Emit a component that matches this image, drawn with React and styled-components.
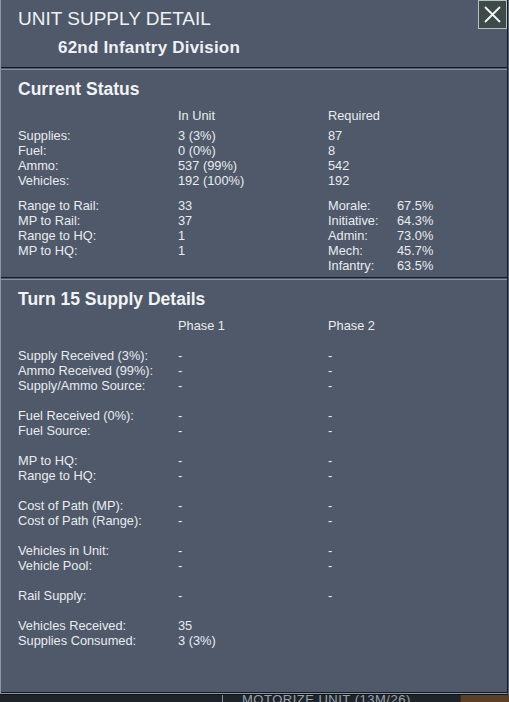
import React from "react";
import styled, { createGlobalStyle } from "styled-components";

const Global = createGlobalStyle`
  html, body { margin: 0; padding: 0; }
  body {
    background: #2a3038;
    width: 509px;
    height: 702px;
    overflow: hidden;
    font-family: "Liberation Sans", Arial, sans-serif;
  }
`;

const Page = styled.div`
  display: flex;
  flex-direction: column;
  width: 509px;
  height: 702px;
  background: #5d6878;
`;

const Panel = styled.div`
  background: #4f596a;
  border-left: 1px solid #8a95a6;
  border-right: 1px solid #141922;
  border-bottom: 1px solid #8a95a6;
  box-shadow: 0 1px 0 #0f1318, 0 2px 0 #0f1318;
  display: flex;
  flex-direction: column;
  gap: 1px;
  box-sizing: border-box;
  width: 508px;
`;

const Header = styled.div`
  display: flex;
  justify-content: space-between;
  align-items: flex-start;
  height: 67px;
  border-bottom: 1px solid #141922;
`;

const TitleBlock = styled.div`
  display: flex;
  flex-direction: column;
  padding: 8px 0 0 17px;
`;

const Title = styled.div`
  font-size: 19px;
  line-height: 22px;
  color: #eef1f5;
  font-weight: 400;
`;

const Subtitle = styled.div`
  font-size: 17px;
  line-height: 20px;
  margin: 8px 0 0 40px;
  color: #eef1f5;
  font-weight: 700;
  letter-spacing: 0.2px;
`;

const CloseButton = styled.button`
  width: 29px;
  height: 29px;
  padding: 0;
  margin: 0;
  border: 1px solid #b9c1c2;
  background: #3d4a48;
  display: flex;
  align-items: center;
  justify-content: center;
  cursor: pointer;
`;

const Section = styled.div`
  border-top: 1px solid #8591a2;
  border-bottom: 1px solid #141922;
  padding: 9px 0 0 17px;
  display: flex;
  flex-direction: column;
  height: ${(p) => p.$h}px;
  box-sizing: content-box;
`;

const SectionTitle = styled.div`
  font-size: 17.5px;
  line-height: 20px;
  font-weight: 700;
  color: #f1f3f6;
  margin-bottom: 9px;
`;

const Grid = styled.div`
  display: grid;
  grid-template-columns: 160px 150px 69px 1fr;
  grid-auto-rows: 15px;
  margin-top: ${(p) => p.$mt || 0}px;
  font-size: 12.8px;
  line-height: 15px;
  color: #e9ecf0;
  white-space: nowrap;
`;

const Cell = styled.div`
  grid-column: ${(p) => p.$col || "auto"};
`;

const Footer = styled.div`
  flex: 1;
  display: flex;
  background: #1f242b;
  overflow: hidden;
  margin-top: 1px;
`;

const FooterLeft = styled.div`
  width: 222px;
  border-right: 1px solid #8a9099;
`;

const FooterText = styled.div`
  flex: 1;
  padding-left: 19px;
  font-size: 13px;
  line-height: 10px;
  color: #9aa3ad;
  letter-spacing: 0.5px;
  white-space: nowrap;
  overflow: hidden;
`;

const FooterPic = styled.div`
  width: 48px;
  background: #5a4026;
  border-left: 1px solid #3a2a1a;
`;

const statusTop = [
  ["Supplies:", "3 (3%)", "87"],
  ["Fuel:", "0 (0%)", "8"],
  ["Ammo:", "537 (99%)", "542"],
  ["Vehicles:", "192 (100%)", "192"],
];

const statusBottom = [
  ["Range to Rail:", "33", "Morale:", "67.5%"],
  ["MP to Rail:", "37", "Initiative:", "64.3%"],
  ["Range to HQ:", "1", "Admin:", "73.0%"],
  ["MP to HQ:", "1", "Mech:", "45.7%"],
  ["", "", "Infantry:", "63.5%"],
];

const details = [
  [
    ["Supply Received (3%):", "-", "-"],
    ["Ammo Received (99%):", "-", "-"],
    ["Supply/Ammo Source:", "-", "-"],
  ],
  [
    ["Fuel Received (0%):", "-", "-"],
    ["Fuel Source:", "-", "-"],
  ],
  [
    ["MP to HQ:", "-", "-"],
    ["Range to HQ:", "-", "-"],
  ],
  [
    ["Cost of Path (MP):", "-", "-"],
    ["Cost of Path (Range):", "-", "-"],
  ],
  [
    ["Vehicles in Unit:", "-", "-"],
    ["Vehicle Pool:", "-", "-"],
  ],
  [["Rail Supply:", "-", "-"]],
  [
    ["Vehicles Received:", "35", ""],
    ["Supplies Consumed:", "3 (3%)", ""],
  ],
];

export default function App() {
  return (
    <Page>
      <Global />
      <Panel>
        <Header>
          <TitleBlock>
            <Title>UNIT SUPPLY DETAIL</Title>
            <Subtitle>62nd Infantry Division</Subtitle>
          </TitleBlock>
          <CloseButton aria-label="Close">
            <svg width="19" height="17" viewBox="0 0 19 17">
              <path d="M2 1 L17 16 M17 1 L2 16" stroke="#f4f6f6" strokeWidth="1.8" />
            </svg>
          </CloseButton>
        </Header>

        <Section $h={198}>
          <SectionTitle>Current Status</SectionTitle>
          <Grid>
            <Cell $col="2">In Unit</Cell>
            <Cell $col="3">Required</Cell>
          </Grid>
          <Grid $mt={5}>
            {statusTop.map(([a, b, c]) => (
              <React.Fragment key={a}>
                <Cell $col="1">{a}</Cell>
                <Cell $col="2">{b}</Cell>
                <Cell $col="3">{c}</Cell>
              </React.Fragment>
            ))}
          </Grid>
          <Grid $mt={10}>
            {statusBottom.map(([a, b, c, d]) => (
              <React.Fragment key={c}>
                <Cell $col="1">{a}</Cell>
                <Cell $col="2">{b}</Cell>
                <Cell $col="3">{c}</Cell>
                <Cell $col="4">{d}</Cell>
              </React.Fragment>
            ))}
          </Grid>
        </Section>

        <Section $h={403}>
          <SectionTitle>Turn 15 Supply Details</SectionTitle>
          <Grid>
            <Cell $col="2">Phase 1</Cell>
            <Cell $col="3">Phase 2</Cell>
          </Grid>
          {details.map((group, gi) => (
            <Grid key={gi} $mt={15}>
              {group.map(([a, b, c]) => (
                <React.Fragment key={a}>
                  <Cell $col="1">{a}</Cell>
                  <Cell $col="2">{b}</Cell>
                  <Cell $col="3">{c}</Cell>
                </React.Fragment>
              ))}
            </Grid>
          ))}
        </Section>
      </Panel>
      <Footer>
        <FooterLeft />
        <FooterText>MOTORIZE UNIT (13M/26)</FooterText>
        <FooterPic />
      </Footer>
    </Page>
  );
}
